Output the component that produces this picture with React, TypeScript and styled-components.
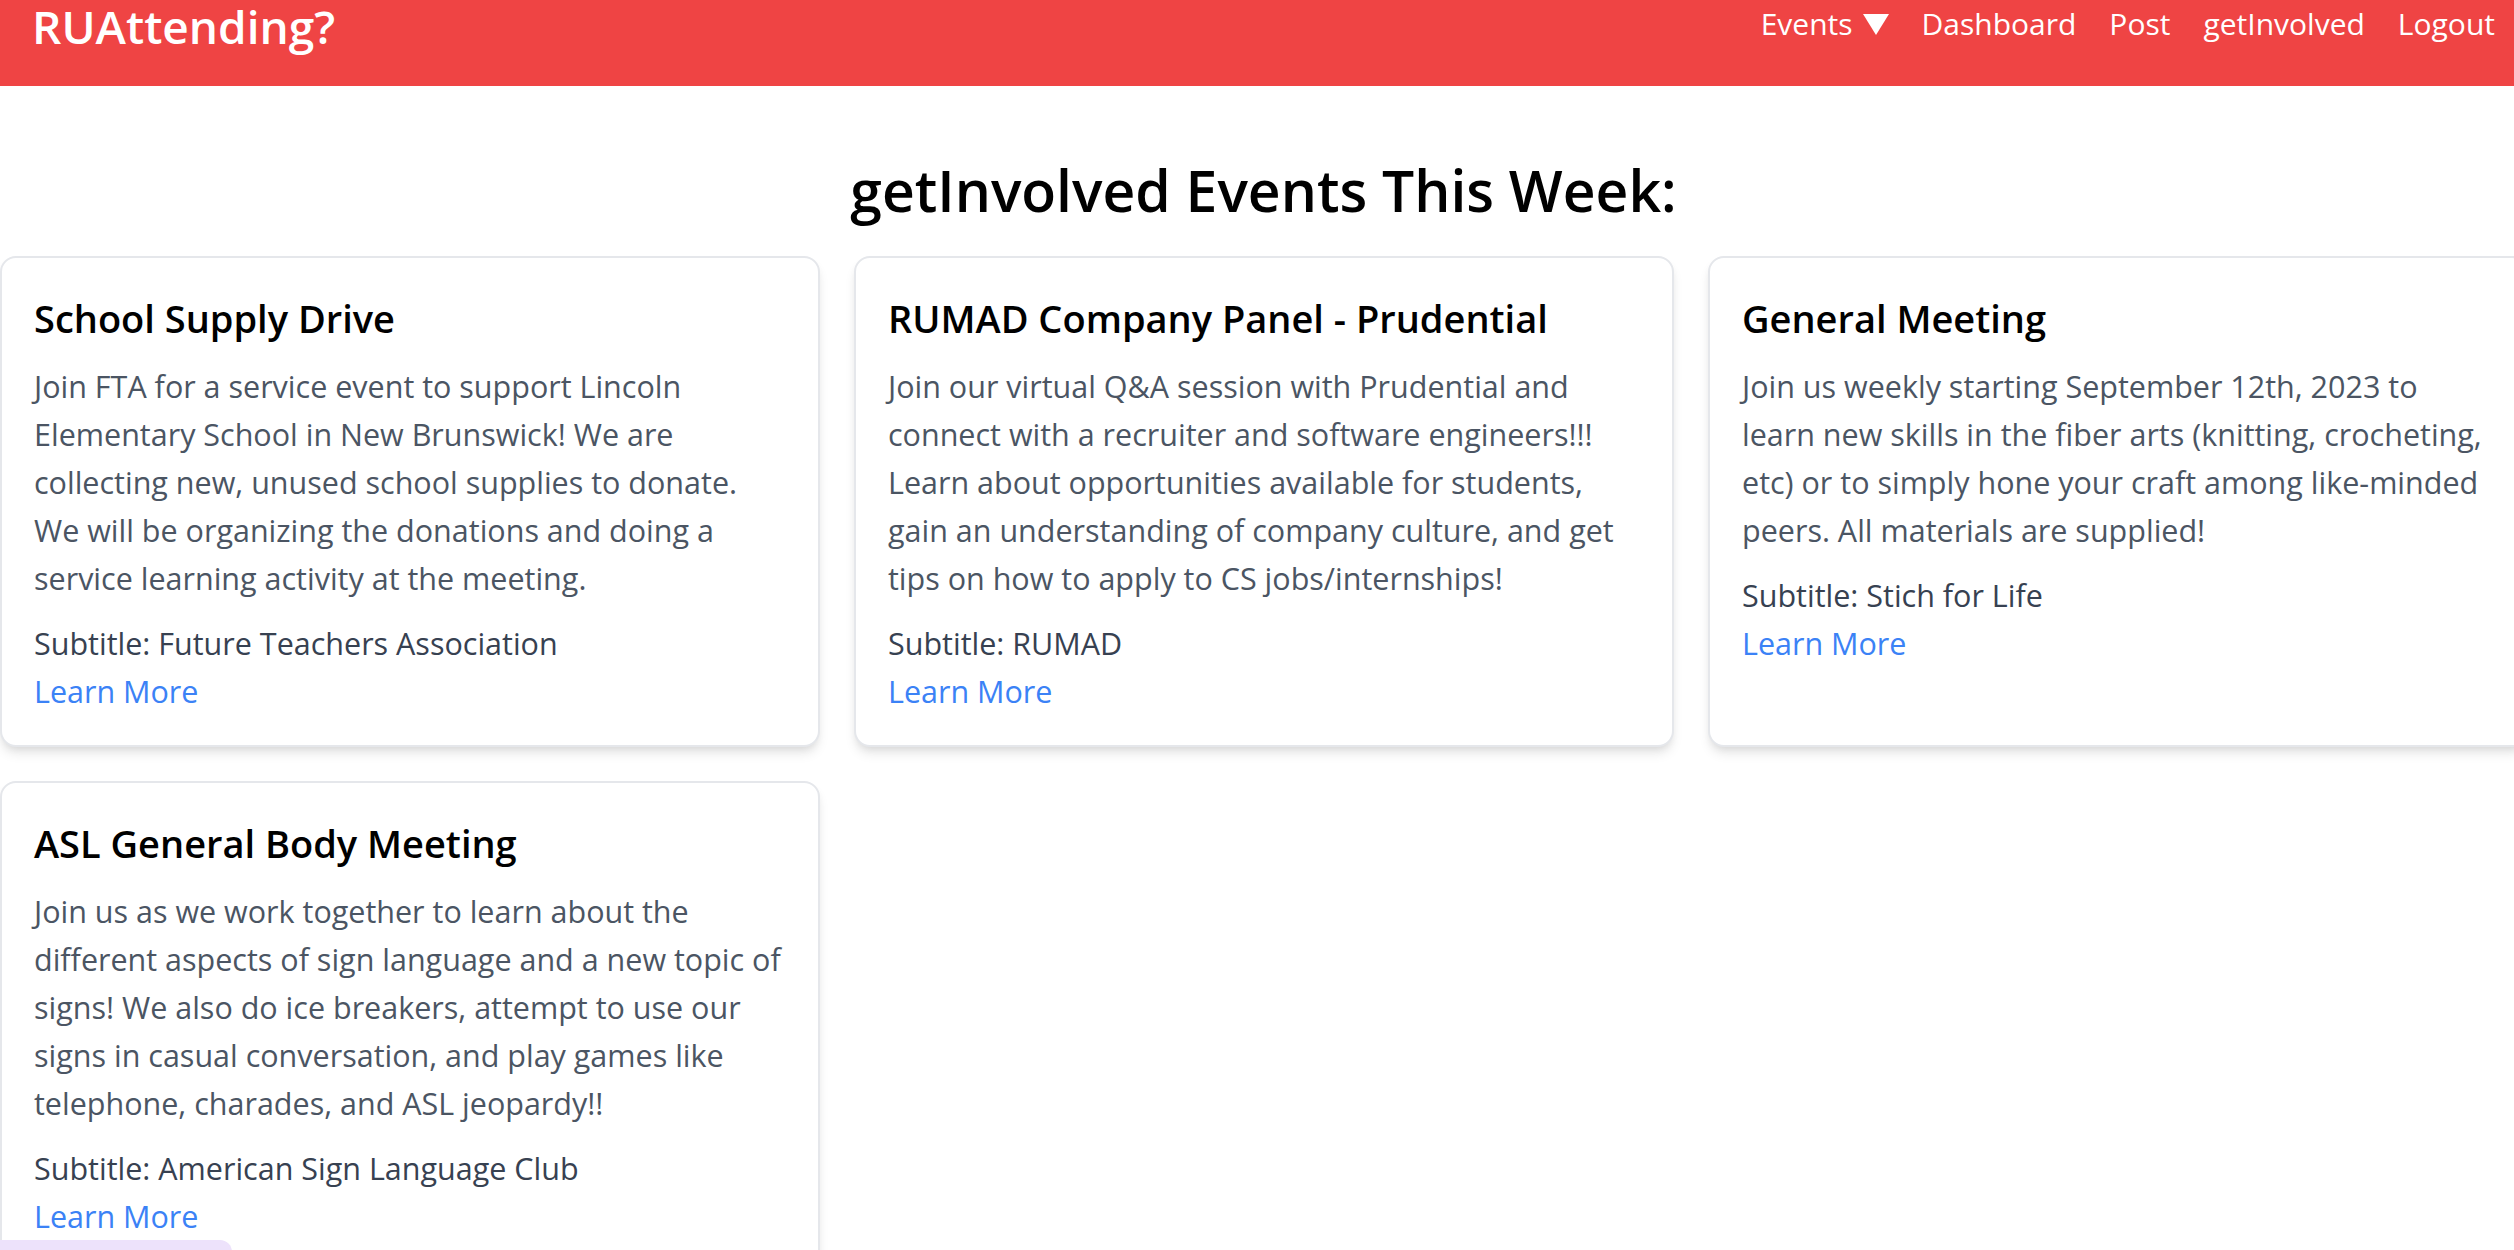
import styled, { createGlobalStyle } from "styled-components";

const GlobalStyle = createGlobalStyle`
  html, body {
    margin: 0;
    padding: 0;
    overflow: hidden;
    background: #fff;
  }
  body {
    font-family: "Open Sans", "Noto Sans", sans-serif;
  }
  * {
    box-sizing: border-box;
  }
`;

const Page = styled.div`
  width: 2527px;
`;

const Navbar = styled.nav`
  display: flex;
  justify-content: space-between;
  align-items: flex-start;
  height: 86px;
  padding: 0 32px;
  background: #ef4444;
  color: #fff;
`;

const Brand = styled.a`
  padding-top: 2px;
  font-size: 46px;
  font-weight: 600;
  line-height: 48px;
  color: #fff;
  text-decoration: none;
`;

const Links = styled.ul`
  display: flex;
  gap: 33px;
  margin: 0;
  padding: 0;
  list-style: none;
`;

const NavLink = styled.a`
  display: flex;
  align-items: center;
  gap: 10px;
  font-size: 30px;
  line-height: 48px;
  color: #fff;
  text-decoration: none;
`;

const Heading = styled.h1`
  margin: 72px 0 34px;
  text-align: center;
  font-size: 57px;
  font-weight: 600;
  line-height: 64px;
  color: #000;
`;

const Grid = styled.div`
  display: grid;
  grid-template-columns: repeat(3, 820px);
  gap: 34px;
`;

const Card = styled.div`
  background: #fff;
  border: 2px solid #e5e7eb;
  border-radius: 16px;
  padding: 32px 32px 30px;
  box-shadow: 0 8px 12px -2px rgba(0, 0, 0, 0.1), 0 4px 8px -4px rgba(0, 0, 0, 0.1);
`;

const CardTitle = styled.h2`
  margin: 0 0 16px;
  font-size: 38px;
  font-weight: 600;
  line-height: 56px;
  color: #000;
`;

const Desc = styled.p`
  margin: 0;
  font-size: 30.5px;
  line-height: 48px;
  color: #4b5563;
  white-space: pre;
`;

const Subtitle = styled.p`
  margin: 17px 0 0;
  font-size: 30.5px;
  line-height: 48px;
  color: #374151;
`;

const LearnMore = styled.a`
  display: block;
  font-size: 30.5px;
  line-height: 48px;
  color: #3b82f6;
  text-decoration: none;
`;

const Widget = styled.div`
  position: fixed;
  left: 0;
  bottom: -30px;
  width: 232px;
  height: 40px;
  border-radius: 0 12px 0 0;
  background: #ede2fb;
`;

const events = [
  {
    title: "School Supply Drive",
    lines: [
      "Join FTA for a service event to support Lincoln",
      "Elementary School in New Brunswick! We are",
      "collecting new, unused school supplies to donate.",
      "We will be organizing the donations and doing a",
      "service learning activity at the meeting.",
    ],
    subtitle: "Future Teachers Association",
  },
  {
    title: "RUMAD Company Panel - Prudential",
    lines: [
      "Join our virtual Q&A session with Prudential and",
      "connect with a recruiter and software engineers!!!",
      "Learn about opportunities available for students,",
      "gain an understanding of company culture, and get",
      "tips on how to apply to CS jobs/internships!",
    ],
    subtitle: "RUMAD",
  },
  {
    title: "General Meeting",
    lines: [
      "Join us weekly starting September 12th, 2023 to",
      "learn new skills in the fiber arts (knitting, crocheting,",
      "etc) or to simply hone your craft among like-minded",
      "peers. All materials are supplied!",
    ],
    subtitle: "Stich for Life",
  },
  {
    title: "ASL General Body Meeting",
    lines: [
      "Join us as we work together to learn about the",
      "different aspects of sign language and a new topic of",
      "signs! We also do ice breakers, attempt to use our",
      "signs in casual conversation, and play games like",
      "telephone, charades, and ASL jeopardy!!",
    ],
    subtitle: "American Sign Language Club",
  },
];

export default function App() {
  return (
    <Page>
      <GlobalStyle />
      <Navbar>
        <Brand href="#">RUAttending?</Brand>
        <Links>
          <li>
            <NavLink href="#">
              Events
              <svg width="26" height="21" viewBox="0 0 26 21">
                <polygon points="0,0 26,0 13,21" fill="#fff" />
              </svg>
            </NavLink>
          </li>
          <li><NavLink href="#">Dashboard</NavLink></li>
          <li><NavLink href="#">Post</NavLink></li>
          <li><NavLink href="#">getInvolved</NavLink></li>
          <li><NavLink href="#">Logout</NavLink></li>
        </Links>
      </Navbar>
      <Heading>getInvolved Events This Week:</Heading>
      <Grid>
        {events.map((ev, i) => (
          <Card key={i}>
            <CardTitle>{ev.title}</CardTitle>
            <Desc>{ev.lines.join("\n")}</Desc>
            <Subtitle>Subtitle: {ev.subtitle}</Subtitle>
            <LearnMore href="#">Learn More</LearnMore>
          </Card>
        ))}
      </Grid>
      <Widget />
    </Page>
  );
}
